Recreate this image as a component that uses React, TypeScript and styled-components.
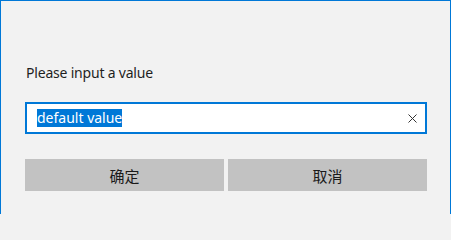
import styled, { createGlobalStyle } from "styled-components";

const GlobalStyle = createGlobalStyle`
  html, body {
    margin: 0;
    padding: 0;
    background: #f2f2f2;
  }
  body {
    font-family: "Noto Sans", "Noto Sans CJK SC", sans-serif;
  }
`;

const Dialog = styled.div`
  box-sizing: border-box;
  width: 451px;
  height: 214px;
  background: #f2f2f2;
  border: 1px solid #0078d7;
  border-bottom: none;
  padding: 62px 23px 0 24px;
  display: flex;
  flex-direction: column;
`;

const Prompt = styled.div`
  font-size: 14px;
  line-height: 20px;
  letter-spacing: -0.2px;
  color: #1f1f1f;
  padding-left: 1px;
`;

const InputBox = styled.div`
  box-sizing: border-box;
  margin-top: 19px;
  height: 32px;
  border: 2px solid #0078d7;
  background: #fff;
  display: flex;
  align-items: center;
  padding: 0 3px 0 10px;
`;

const Selected = styled.span`
  background: #0078d7;
  color: #fff;
  font-size: 14px;
  line-height: 18px;
  height: 18px;
  white-space: pre;
`;

const Spacer = styled.div`
  flex: 1;
`;

const ClearButton = styled.button`
  border: none;
  background: none;
  padding: 0;
  width: 20px;
  height: 20px;
  display: flex;
  align-items: center;
  justify-content: center;
  cursor: pointer;
`;

const Actions = styled.div`
  margin-top: 25px;
  display: grid;
  grid-template-columns: 1fr 1fr;
  gap: 4px;
`;

const ActionButton = styled.button`
  height: 32px;
  border: none;
  background: #c2c2c2;
  color: #1a1a1a;
  font-family: "Noto Sans CJK SC", sans-serif;
  font-size: 15px;
  padding: 0;
`;

const App = () => {
  return (
    <>
      <GlobalStyle />
      <Dialog>
        <Prompt>Please input a value</Prompt>
        <InputBox>
          <Selected>default value</Selected>
          <Spacer />
          <ClearButton aria-label="clear">
            <svg width="9" height="9" viewBox="0 0 9 9">
              <path d="M0.5 0.5L8.5 8.5M8.5 0.5L0.5 8.5" stroke="#333" strokeWidth="1" />
            </svg>
          </ClearButton>
        </InputBox>
        <Actions>
          <ActionButton>确定</ActionButton>
          <ActionButton>取消</ActionButton>
        </Actions>
      </Dialog>
    </>
  );
};

export default App;
